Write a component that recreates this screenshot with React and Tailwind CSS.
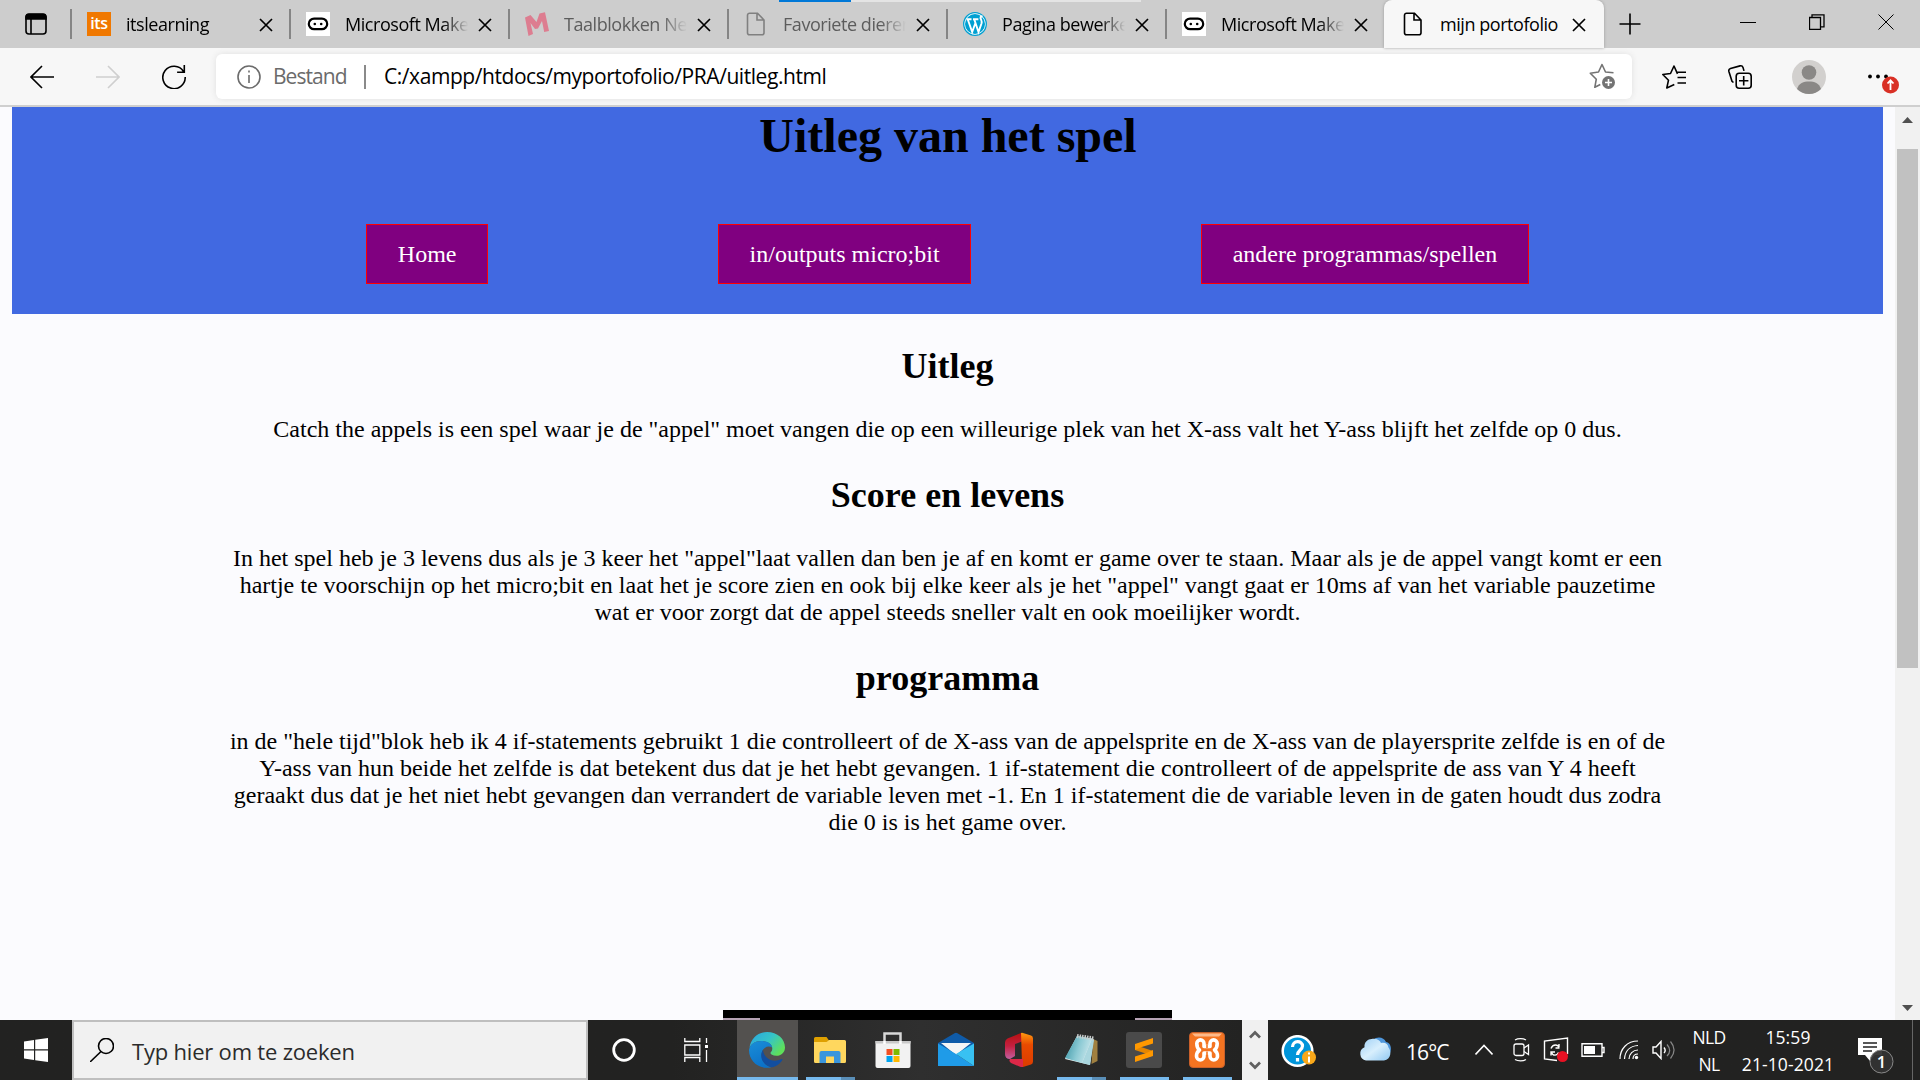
const Svg = ({ w = 24, h = 24, vb, className = "", children }) => (
  <svg width={w} height={h} viewBox={vb || `0 0 ${w} ${h}`} fill="none" stroke="currentColor" strokeWidth="1.6" className={`shrink-0 ${className}`}>
    {children}
  </svg>
);

const Doc = () => (
  <Svg><path d="M5.500 1.200h8L20 8v12.800a2 2 0 0 1-2 2H5.500a2 2 0 0 1-2-2V3.200a2 2 0 0 1 2-2zM13 1.500V8h6.700" /></Svg>
);
const MakeCode = () => (
  <Svg>
    <path fill="#fff" stroke="none" d="M0 0h24v24H0z" />
    <rect x="2.800" y="6.600" width="18.400" height="10.600" rx="5.300" stroke="#000" strokeWidth="2.200" />
    <circle cx="8.800" cy="12" r="1.300" fill="#000" stroke="none" /><circle cx="15.200" cy="12" r="1.300" fill="#000" stroke="none" />
  </Svg>
);
const Its = () => (
  <span className="flex h-6 w-6 shrink-0 items-center justify-center bg-[#f07800] pb-0.5 font-['Open_Sans',sans-serif] text-[16px] leading-none font-semibold tracking-[-0.4px] text-white">its</span>
);
const Taal = () => (
  <Svg><path d="M0 5.500 5.500 3l6 7L14.500 1.500 20 .2 24 19l-4.800 1-2.200-11-4 7.500-3 .6L5.500 11 8 22l-4.500 2z" fill="#dd7d90" stroke="none" /></Svg>
);
const WordPress = () => (
  <Svg>
    <circle cx="12" cy="12" r="11.300" fill="#fff" stroke="#00a0d2" strokeWidth="1.300" />
    <circle cx="12" cy="12" r="10" fill="#00a0d2" stroke="none" />
    <path d="M3.500 7.200h5M10 7.200h5.400M4.800 7.500 9.200 20l3.200-9M11.300 7.500 15.500 20l3-8.500c.8-2.500-.7-4-1-5.500 0-1 .8-1.800 2-1.800" stroke="#fff" strokeWidth="1.900" />
  </Svg>
);
const Close = () => <Svg w={14} h={14} className="text-black"><path d="m1 1 12 12M13 1 1 13" strokeWidth="1.700" /></Svg>;

const tabs = [
  { t: "itslearning", icon: <Its /> },
  { t: "Microsoft Make", icon: <MakeCode /> },
  { t: "Taalblokken Ne", icon: <Taal />, dim: true },
  { t: "Favoriete dieren", icon: <Doc />, dim: true },
  { t: "Pagina bewerke", icon: <WordPress /> },
  { t: "Microsoft Make", icon: <MakeCode /> },
];

const TabBar = () => (
  <div className="relative flex h-12 shrink-0 bg-[#cdcdcd] text-[18px] tracking-[-0.45px]">
    <div className="absolute top-0 left-[779px] flex h-0.5 w-[362px] bg-[#e4e4e4]"><div className="w-[72px] bg-[#0078d7]" /></div>
    <div className="flex w-[70px] items-center justify-center pl-0.5">
      <Svg><rect x="2" y="2.500" width="20" height="19.500" rx="3" /><path d="M2 7V5a3 3 0 0 1 3-3h14a3 3 0 0 1 3 3v2z" fill="currentColor" /><path d="M7 7v15" /></Svg>
    </div>
    {tabs.map((x, i) => (
      <div key={i} className="flex h-12 w-[219px] items-center">
        <div className="h-[30px] w-[2px] shrink-0 bg-[#858585]" />
        <div className={x.dim ? "ml-[15px] text-[#808080]" : "ml-[15px] text-black"}>{x.icon}</div>
        <div className={`ml-[15px] w-[123px] overflow-hidden whitespace-nowrap [mask-image:linear-gradient(to_right,black_98px,transparent_123px)] ${x.dim ? "text-[#5c5c5c]" : "text-black"}`}>{x.t}</div>
        <div className="ml-[10px] pt-0.5"><Close /></div>
      </div>
    ))}
    <div className="flex h-12 w-[220px] items-center rounded-t-lg bg-[#f7f7f7] shadow-[0_0_3px_#999]">
      <div className="ml-[17px]"><Doc /></div>
      <div className="ml-[15px] w-[122px] whitespace-nowrap">mijn portofolio</div>
      <div className="ml-[10px] pt-0.5"><Close /></div>
    </div>
    <div className="flex w-[51px] items-center justify-center"><Svg><path d="M12 1.500v21M1.500 12h21" /></Svg></div>
    <div className="ml-auto flex h-[43px] w-[207px] items-center justify-around">
      <Svg w={16} h={16}><path d="M0 8.500h16" strokeWidth="1" /></Svg>
      <Svg w={16} h={16}><path d="M.5 3.500h11v12H.5zM3 3.500V.8h12v12h-3.500" strokeWidth="1.300" /></Svg>
      <Svg w={16} h={16}><path d="m.5.500 15 15M15.500.500l-15 15" strokeWidth="1" /></Svg>
    </div>
  </div>
);

const ToolBar = () => (
  <div className="flex h-[59px] shrink-0 items-center border-b-2 border-[#cfcfcf] bg-[#f7f7f7] shadow-[0_-1px_1px_#aaa]">
    <div className="flex w-[216px] items-center pl-[30px]">
      <Svg><path d="M24 12H1M12 1 1 12l11 11" /></Svg>
      <Svg className="ml-[42px] text-[#cfcfcf]"><path d="M0 12h23M12 1l11 11-11 11" /></Svg>
      <Svg className="ml-[42px]"><path d="M21.500 6.500A11.200 11.200 0 1 0 23.200 12M22.300 0v7.200h-7.200" /></Svg>
    </div>
    <div className="flex h-[45px] w-[1416px] items-center rounded-md bg-white pl-[21px] text-[21px] shadow-[0_0_6px_#e0e0e0]">
      <Svg className="text-[#6b6b6b]"><circle cx="12" cy="12" r="11" /><path d="M12 10v8M12 5.500v2" /></Svg>
      <span className="ml-[12px] w-[73px] tracking-[-0.95px] text-[#6b6b6b]">Bestand</span>
      <div className="ml-[18px] h-6 w-0.5 bg-[#8a8a8a]" />
      <span className="ml-[18px] tracking-[-0.44px]">C:/xampp/htdocs/myportofolio/PRA/uitleg.html</span>
      <Svg w={27} h={27} className="mr-[16px] ml-auto text-[#737373]">
        <path d="M24.500 9.800 16.500 9 13 1.500 9.500 9l-8.200 1.200 6 6L5.800 24.300l5.500-2.800" strokeLinejoin="round" />
        <circle cx="19.500" cy="19.500" r="6.500" fill="currentColor" stroke="none" /><path d="M19.500 16v7M16 19.500h7" stroke="#fff" />
      </Svg>
    </div>
    <div className="flex items-center pl-[30px]">
      <Svg><path d="M15.500 8.800 12 1 8.500 8.500.8 9.500l5.700 5.700L4.800 23l7.500-3.500M15.500 7.200H24M15.500 12.500H24M15.500 18H24" strokeLinejoin="round" /></Svg>
      <Svg className="ml-[42px]"><rect x="8.200" y="8.200" width="15" height="15" rx="3" /><path d="M15.700 11v9.400M11 15.700h9.400M5.500 17.500 4 16.300.9 6.500C.5 5 1 4 2.500 3.500L12 .9c1.500-.3 2.500 0 3 1.500l1 3.500" /></Svg>
      <Svg w={34} h={34} className="ml-[40px]">
        <circle cx="17" cy="17" r="17" fill="#d2d0ce" stroke="none" /><circle cx="17" cy="12.500" r="7.300" fill="#8a8886" stroke="none" /><path d="M5 29c2-6 6.500-7.500 12-7.500s10 1.500 12 7.500A17 17 0 0 1 17 34a17 17 0 0 1-12-5z" fill="#8a8886" stroke="none" />
      </Svg>
      <Svg w={34} h={34} className="ml-[42px]">
        <g fill="#000" stroke="none"><circle cx="2" cy="16.500" r="1.900" /><circle cx="10" cy="16.500" r="1.900" /><circle cx="18" cy="16.500" r="1.900" /></g>
        <circle cx="22.500" cy="25" r="8.500" fill="#d93025" stroke="none" /><path d="M22.500 30V20.500M19.500 23.500l3-3.200 3 3.200" stroke="#fff" strokeWidth="1.800" />
      </Svg>
    </div>
  </div>
);

const NavButton = ({ children }) => (
  <a className="flex h-[60px] items-center border border-[red] bg-[purple] px-[30.800px] text-white">{children}</a>
);
const H2 = ({ children }) => <h2 className="mt-8 text-[36px] leading-[41px] font-bold">{children}</h2>;

const Page = () => (
  <div className="flex min-h-0 flex-1 bg-[#fbfbfe]">
    <div className="flex w-[1895px] flex-col items-center overflow-hidden px-3 text-center font-['Liberation_Serif',serif] text-[24px] leading-[27px] text-black">
      <header className="h-[207px] w-full shrink-0 bg-[royalblue] pt-[1px]">
        <h1 className="pl-[1px] text-[48px] leading-[56px] font-bold">Uitleg van het spel</h1>
        <nav className="mt-[60px] flex justify-center gap-[229.500px]">
          <NavButton>Home</NavButton>
          <NavButton>in/outputs micro;bit</NavButton>
          <NavButton>andere programmas/spellen</NavButton>
        </nav>
      </header>
      <H2>Uitleg</H2>
      <p className="mt-[29px] whitespace-nowrap">Catch the appels is een spel waar je de "appel" moet vangen die op een willeurige plek van het X-ass valt het Y-ass blijft het zelfde op 0 dus.</p>
      <H2>Score en levens</H2>
      <p className="mt-[29px] whitespace-nowrap">
        In het spel heb je 3 levens dus als je 3 keer het "appel"laat vallen dan ben je af en komt er game over te staan. Maar als je de appel vangt komt er een<br />
        hartje te voorschijn op het micro;bit en laat het je score zien en ook bij elke keer als je het "appel" vangt gaat er 10ms af van het variable pauzetime<br />
        wat er voor zorgt dat de appel steeds sneller valt en ook moeilijker wordt.
      </p>
      <H2>programma</H2>
      <p className="mt-[29px] whitespace-nowrap">
        in de "hele tijd"blok heb ik 4 if-statements gebruikt 1 die controlleert of de X-ass van de appelsprite en de X-ass van de playersprite zelfde is en of de<br />
        Y-ass van hun beide het zelfde is dat betekent dus dat je het hebt gevangen. 1 if-statement die controlleert of de appelsprite de ass van Y 4 heeft<br />
        geraakt dus dat je het niet hebt gevangen dan verrandert de variable leven met -1. En 1 if-statement die de variable leven in de gaten houdt dus zodra<br />
        die 0 is is het game over.
      </p>
      <div className="mt-auto flex h-[10px] w-[449px] shrink-0 items-end justify-between bg-black">
        <div className="h-[2px] w-[37px] bg-[#b7a3b5]" /><div className="h-[2px] w-[37px] bg-[#b7a3b5]" />
      </div>
    </div>
    <div className="flex w-[25px] flex-col items-center bg-[#f1f1f1] pt-2.5 pb-[9px]">
      <Svg w={11} h={6}><path d="M0 6 5.500 0 11 6z" fill="#505050" stroke="none" /></Svg>
      <div className="mt-[26px] h-[519px] w-[21px] bg-[#c1c1c1]" />
      <Svg w={11} h={6} className="mt-auto"><path d="M0 0h11L5.500 6z" fill="#505050" stroke="none" /></Svg>
    </div>
  </div>
);

const EdgeIcon = () => (
  <Svg w={36} h={36}>
    <defs>
      <linearGradient id="e1" x1="0" y1="0" x2="1" y2=".6"><stop stopColor="#2aa5e0" /><stop offset=".55" stopColor="#35c4c8" /><stop offset="1" stopColor="#5fe05a" /></linearGradient>
      <linearGradient id="e2" x1="0" y1="0" x2=".4" y2="1"><stop stopColor="#1a8ed8" /><stop offset="1" stopColor="#0c72c8" /></linearGradient>
    </defs>
    <g stroke="none">
      <path d="M.5 16C1.500 6.500 9 0 18 0c10.500 0 18 7 18 15.500 0 5-4 8.300-8.500 8.300-4 0-6-1.600-6-2.800 0-1 1.800-1.600 1.800-4.300C23.300 12 18 9 12.500 9 6 9 1.500 12.500.5 16z" fill="url(#e1)" />
      <path d="M0 18C1 12 6 9 12.500 9c5.500 0 10 2.500 10.700 6.500C19 12.500 12.500 16 12.500 23c0 6.500 5 11.500 10 12.300C11 38 0 30 0 18z" fill="url(#e2)" />
      <path d="M14 18c-4 6-1 15 8.500 17.300C28 34.500 31.500 31 33.300 28c.5-1-.3-1.300-1-.8C24 31 15 27 14 18z" fill="#124e9f" />
    </g>
  </Svg>
);
const Explorer = () => (
  <Svg w={32} h={26}><g stroke="none"><path d="M0 1.500A1.500 1.500 0 0 1 1.500 0h11L15 3.500 12 6H0z" fill="#dfa000" /><path d="M0 5h12.500L15 3h15.500A1.500 1.500 0 0 1 32 4.500v20a1.500 1.500 0 0 1-1.500 1.500h-29A1.500 1.500 0 0 1 0 24.500z" fill="#ffd75e" /><path d="M5.500 26V16a2 2 0 0 1 2-2h17a2 2 0 0 1 2 2v10H20v-6.500h-8V26z" fill="#3a96dd" /></g></Svg>
);
const Store = () => (
  <Svg w={36} h={36}><path d="M9.500 12V1.500h16V12" stroke="#d8d8d8" strokeWidth="2.500" /><path d="M.5 9h35v25a2 2 0 0 1-2 2h-31a2 2 0 0 1-2-2z" fill="#f2f2f2" stroke="none" /><path d="M.5 9h35v2.500H.5z" fill="#c9c9c9" stroke="none" /><path d="M9.500 9v3M25.500 9v3" stroke="#fff" strokeWidth="2.500" /><g stroke="none"><path d="M11.500 17h6v6h-6z" fill="#f25022" /><path d="M18.500 17h6v6h-6z" fill="#7fba00" /><path d="M11.500 24h6v6h-6z" fill="#00a4ef" /><path d="M18.500 24h6v6h-6z" fill="#ffb900" /></g></Svg>
);
const Mail = () => (
  <Svg w={36} h={36}><g stroke="none"><path d="M0 11 16.500 1.200q1.500-.8 3 0L36 11v10H0z" fill="#0f5ba8" /><path d="M3 11h30L18 23z" fill="#f5f5f5" /><path d="M0 11.500V34h36L18 22z" fill="#1f9be8" /><path d="M36 11.500V34L18 22z" fill="#38c1f2" /></g></Svg>
);
const Office = () => (
  <Svg w={28} h={36}>
    <defs>
      <linearGradient id="o1" x1="0" y1="0" x2="0" y2="1"><stop stopColor="#b81010" /><stop offset=".5" stopColor="#c42040" /><stop offset="1" stopColor="#c35fa0" /></linearGradient>
      <linearGradient id="o2" x1="0" y1="0" x2="0" y2="1"><stop stopColor="#ff9a10" /><stop offset=".35" stopColor="#e84a00" /><stop offset="1" stopColor="#dc3c00" /></linearGradient>
    </defs>
    <g stroke="none"><path d="M0 10.500Q0 8 2.500 6.500L16 1l2 8-8 3v12l-5 3q-5 0-5-5z" fill="url(#o1)" /><path d="M16 1q1-.4 2 0l8 2.500q2 .7 2 3v23q0 2.300-2 3L18 35l-1-4z" fill="url(#o2)" /><path d="M5 27h13v8q-1.500.3-3-.3L6 31q-2.500-2-1-4z" fill="#dc2848" /></g>
  </Svg>
);
const Notepad = () => (
  <Svg w={34} h={34}>
    <defs><linearGradient id="n1" x1="0" y1=".3" x2="1" y2=".6"><stop stopColor="#3f98a8" /><stop offset=".5" stopColor="#8ccad4" /><stop offset="1" stopColor="#cfe9ee" /></linearGradient></defs>
    <path d="M28 6l4.500 2v20l-6 3z" fill="#a08040" stroke="none" />
    <path d="M12 3l16.500 3L25 32 0 26z" fill="#eef4f5" stroke="none" /><path d="M12 3l15 2.500L17 30 0 25z" fill="url(#n1)" stroke="none" /><path d="M27 5.500 29 7l-4 25-8-2z" fill="#a9d6de" stroke="none" />
    <path d="m12 3 17 2.500" stroke="#c8cccc" strokeWidth="4" strokeDasharray="1.500 1" />
  </Svg>
);
const Sublime = () => (
  <Svg w={36} h={36}><rect width="36" height="36" rx="3" fill="#4a4a4a" stroke="none" /><path d="M9 13v5l18 6v-5z" fill="#e58600" stroke="none" /><path d="M27 6v5.500L15 15.300 9 18v-6zM9 30v-5.500l12-3.800 6-2.700v6z" fill="#ff9800" stroke="none" /></Svg>
);
const Xampp = () => (
  <Svg w={36} h={36}>
    <rect x=".5" y=".5" width="35" height="35" rx="3.500" fill="#f47421" stroke="#c9602a" strokeWidth="1" />
    <path d="M3 1.500h30l-3 3H6z" fill="#fdb98a" stroke="none" />
    <path d="M15 14.500h6v-3a3.600 3.600 0 0 1 7.200 0c0 3-.8 5-2.700 6.500 1.900 1.500 3 3.500 3 6.200a3.700 3.700 0 0 1-7.500 0V21h-6v3.200a3.700 3.700 0 0 1-7.500 0c0-2.700 1.100-4.700 3-6.200-1.900-1.500-2.700-3.500-2.700-6.500a3.600 3.600 0 0 1 7.200 0z" stroke="#fff" strokeWidth="3.600" strokeLinejoin="round" />
    <path d="M18 13v3M18 19.500V23" stroke="#f47421" strokeWidth="1.600" />
  </Svg>
);

const TaskIcon = ({ icon, line, split, active }) => (
  <div className="flex h-[60px] w-[62.850px] shrink-0 flex-col items-center">
    <div className={`flex h-[57px] items-center justify-center pt-[3px] ${active ? "w-[61px] bg-[#53514f]" : "w-full"}`}>{icon}</div>
    {line && <div className={`flex h-[3px] justify-end bg-[#76b9ed] ${active ? "w-[61px]" : "w-[49px]"}`}>{split && <div className="w-[14px] bg-[#5a8fb8]" />}</div>}
  </div>
);

const TaskBar = () => (
  <div className="flex h-[60px] shrink-0 items-center overflow-hidden bg-linear-to-r from-[#222221] from-35% via-[#2f2f2f] via-48% to-[#222221] to-66% text-white">
    <div className="flex w-[72px] shrink-0 justify-center"><Svg className="text-white"><path d="M0 3.500 10 2v9.300H0zM11.200 1.800 24 0v11.300H11.200zM0 12.500h10V22L0 20.500zM11.200 12.500H24V24l-12.800-1.800z" fill="#fff" stroke="none" /></Svg></div>
    <div className="flex h-[60px] w-[516px] shrink-0 items-center border-2 border-[#bfbfbf] bg-[#f1f1f1] pl-4 text-[22px] tracking-[-0.2px] text-[#2b2b2b]">
      <Svg className="text-black"><circle cx="16" cy="8" r="7.500" /><path d="M11 13.500 0 24" /></Svg>
      <span className="ml-[18px] pt-0.5">Typ hier om te zoeken</span>
    </div>
    <div className="flex w-[72px] shrink-0 justify-center"><Svg><circle cx="12" cy="12" r="10.300" strokeWidth="2.800" /></Svg></div>
    <div className="flex w-[76px] shrink-0 pl-[24px]"><Svg><path d="M.8 0v3.500h15V0M.8 24v-4.500h15V24M.8 7h15v10H.8zM22.500 0v5M22.500 12v12" strokeWidth="1.300" /><path d="M21 7h3v3h-3z" fill="#fff" stroke="none" /></Svg></div>
    <TaskIcon icon={<EdgeIcon />} line active />
    <TaskIcon icon={<Explorer />} line split />
    <TaskIcon icon={<Store />} />
    <TaskIcon icon={<Mail />} />
    <TaskIcon icon={<Office />} />
    <TaskIcon icon={<Notepad />} line split />
    <TaskIcon icon={<Sublime />} line />
    <TaskIcon icon={<Xampp />} line />
    <div className="ml-[3.200px] flex h-[60px] w-[26px] shrink-0 flex-col items-center justify-between bg-[#f0f0f0] py-2.5 text-[#606060]">
      <Svg w={12} h={9}><path d="m1 7.500 5-5 5 5" strokeWidth="2.700" /></Svg>
      <Svg w={12} h={9}><path d="m1 1.500 5 5 5-5" strokeWidth="2.700" /></Svg>
    </div>
    <div className="ml-[13px] flex h-full shrink-0 items-center pt-1">
      <Svg w={36} h={34}><circle cx="16.500" cy="16" r="14.800" fill="#0095da" stroke="#fff" strokeWidth="2.500" /><path d="M11.500 12c0-7 10-7 10-1 0 4-5 4-5 9M16.500 23v3.500" stroke="#fff" strokeWidth="3.200" /><circle cx="28" cy="22.500" r="7" fill="#f9a81a" stroke="none" /><path d="M28 21.500v6M28 17.500v2" stroke="#fff" strokeWidth="2" /></Svg>
    </div>
    <Svg w={34} h={32} className="ml-[41px]">
      <defs><linearGradient id="c1" x1="0" y1="0" x2="1" y2="1"><stop stopColor="#9fd0f5" /><stop offset=".5" stopColor="#d8effd" /><stop offset="1" stopColor="#90c8f2" /></linearGradient></defs>
      <path d="M15 6c4-4 11-3 13 2 5 1 6 7 4 11l-8 4z" fill="#4f97dc" stroke="none" />
      <path d="M8 26.500a7 7 0 0 1-1.500-13.300C6 8 10 5 13.500 5 18 4 22 6 23 9c4-1 7 1 7.500 4.500 3 3 3 12-4.500 13z" fill="url(#c1)" stroke="none" />
    </Svg>
    <span className="ml-[14px] w-[63px] shrink-0 pt-1.5 text-[21px] tracking-[-0.9px]">16°C</span>
    <Svg w={18} h={12} className="ml-[6px]"><path d="m.5 10.500 8.500-9 8.500 9" /></Svg>
    <Svg w={18} h={28} className="ml-[19px]"><rect x="2" y="8" width="10" height="11.500" rx="2" strokeWidth="1.300" /><path d="M12 12l4.500-3v9.500L12 15.500M3 4c3-1.800 8-1.800 11 0M3 23.500c3 1.800 8 1.800 11 0" strokeWidth="1.300" /></Svg>
    <Svg w={26} h={30} className="ml-[13px]"><path d="M14 25.500 1.500 24V6L24.500 3v16M8 13.500c2-5 7-4 8-1v-3.500M16.500 13h-4M8 20.500V17h4M8.500 17.500c1.500 4 6 3 7 0" strokeWidth="1.400" /><circle cx="19.500" cy="21.500" r="5.500" fill="#e81123" stroke="none" /></Svg>
    <Svg w={24} h={14} className="ml-[12px]"><path d="M1 .8h20v12.400H1zM21 4.500h2v5h-2" strokeWidth="1.400" /><path d="M3 3h11v8H3z" fill="#fff" stroke="none" /></Svg>
    <Svg w={20} h={20} className="ml-[14px]"><path d="M1 19C1 9 8 1 19 1M5.500 19C6 11 11 6 19 5.500M10 19c0-5 4-9 9-9M14 19c0-3 2-5 5-5" strokeWidth="1.200" /><circle cx="17.500" cy="17.500" r="1.700" fill="#fff" stroke="none" /></Svg>
    <Svg w={24} h={20} className="ml-[13px]"><path d="M1 7h3l5-5.500v17L4 13H1zM12 7.500c1.500 2 1.500 4 0 5.500" strokeWidth="1.400" /><path d="M15 4.500c3.500 4 3.500 8 0 11.500M18.500 1.500c5 6 5 11 0 17" stroke="#888" strokeWidth="1.200" /></Svg>
    <div className="ml-[13px] w-[40px] shrink-0 pt-[2px] text-center text-[17.500px] leading-[27px] tracking-[-0.7px]">NLD<br />NL</div>
    <div className="ml-[11px] w-[96px] shrink-0 pt-px text-center text-[17.500px] leading-[27px] tracking-[0.1px] whitespace-nowrap">15:59<br />21-10-2021</div>
    <Svg w={38} h={48} className="ml-[21px]"><path d="M1 12h24v17h-7l-5 6-5-6H1z" fill="#fff" stroke="none" /><path d="M6 17h14M6 21h14M6 25h9" stroke="#222" strokeWidth="1.400" /><circle cx="24.500" cy="35.500" r="11.500" fill="#333" fillOpacity=".95" stroke="#888" strokeWidth="1" /><text x="24.500" y="41.500" textAnchor="middle" fill="#fff" stroke="none" fontSize="16.500" fontWeight="600">1</text></Svg>
    <div className="ml-auto h-full w-[8px] shrink-0 border-l border-[#666]" />
  </div>
);

export default function App() {
  return (
    <div className="flex h-[1080px] w-[1920px] flex-col overflow-hidden bg-[#fbfbfe] font-['Open_Sans',sans-serif] text-black">
      <TabBar />
      <ToolBar />
      <Page />
      <TaskBar />
    </div>
  );
}
